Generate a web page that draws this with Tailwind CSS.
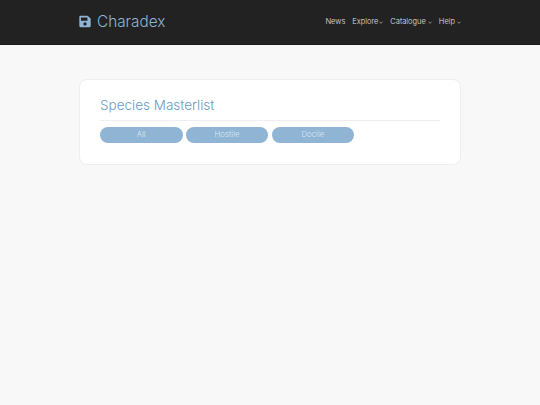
<!DOCTYPE html>
<html>
<head>
<meta charset="utf-8">
<script src="https://cdn.jsdelivr.net/npm/@tailwindcss/browser@4"></script>
</head>
<body class="bg-[#f8f8f8] font-['Inter',sans-serif] font-light h-[405px] overflow-hidden">
<header class="h-[45px] bg-[#222222] border-b border-[#1a1a1a]">
  <div class="w-[383px] ml-[78px] h-full flex items-center justify-between">
    <a class="flex items-center gap-[6px] text-[#8fb4d4] text-[15.3px]">
      <svg class="w-[12px] h-[13px] ml-px -mt-px" viewBox="0 0 448 512"><path fill="#8fb4d4" d="M433.900 129.900l-83.900-83.900A48 48 0 0 0 316.100 32H48C21.500 32 0 53.500 0 80v352c0 26.500 21.500 48 48 48h352c26.500 0 48-21.500 48-48V163.900a48 48 0 0 0-14.100-34zM224 416c-35.300 0-64-28.700-64-64 0-35.300 28.700-64 64-64s64 28.700 64 64c0 35.300-28.700 64-64 64zm96-304.500V212c0 6.600-5.400 12-12 12H76c-6.600 0-12-5.400-12-12V108c0-6.600 5.400-12 12-12h228.500c3.200 0 6.200 1.300 8.500 3.500l3.500 3.500A12 12 0 0 1 320 111.500z"/></svg>
      <span>Charadex</span>
    </a>
    <nav class="flex items-center gap-[7px] text-[#e0e0e0] text-[7.500px]">
      <span>News</span>
      <span class="flex items-center gap-[1px]">Explore<svg class="w-[4px] h-[3px] mt-px" viewBox="0 0 4 3"><path d="M0.500 1l1.500 1.200L3.500 1" fill="none" stroke="#bbbbbb" stroke-width="0.700"/></svg></span>
      <span class="flex items-center gap-[2px]">Catalogue<svg class="w-[4px] h-[3px] mt-px" viewBox="0 0 4 3"><path d="M0.500 1l1.500 1.200L3.500 1" fill="none" stroke="#bbbbbb" stroke-width="0.700"/></svg></span>
      <span class="flex items-center gap-[2px]">Help<svg class="w-[4px] h-[3px] mt-px" viewBox="0 0 4 3"><path d="M0.500 1l1.500 1.200L3.500 1" fill="none" stroke="#bbbbbb" stroke-width="0.700"/></svg></span>
    </nav>
  </div>
</header>
<main class="ml-[79px] mt-[33.500px] w-[382px] h-[86px] bg-white border border-[#eeeeee] rounded-[8px] px-[20px] pt-[15px]">
  <h1 class="text-[#6a9bc3] text-[13.500px] leading-[20px] pb-[5px] border-b border-[#eeeeee]">Species Masterlist</h1>
  <div class="flex gap-[3.300px] mt-[6px]">
    <div class="w-[82.500px] h-[16.500px] rounded-[8px] bg-[#8fb4d4] text-[#dce8f2] text-[7.800px] flex items-center justify-center">All</div>
    <div class="w-[82.500px] h-[16.500px] rounded-[8px] bg-[#8fb4d4] text-[#dce8f2] text-[7.800px] flex items-center justify-center">Hostile</div>
    <div class="w-[82.500px] h-[16.500px] rounded-[8px] bg-[#8fb4d4] text-[#dce8f2] text-[7.800px] flex items-center justify-center">Docile</div>
  </div>
</main>
</body>
</html>
